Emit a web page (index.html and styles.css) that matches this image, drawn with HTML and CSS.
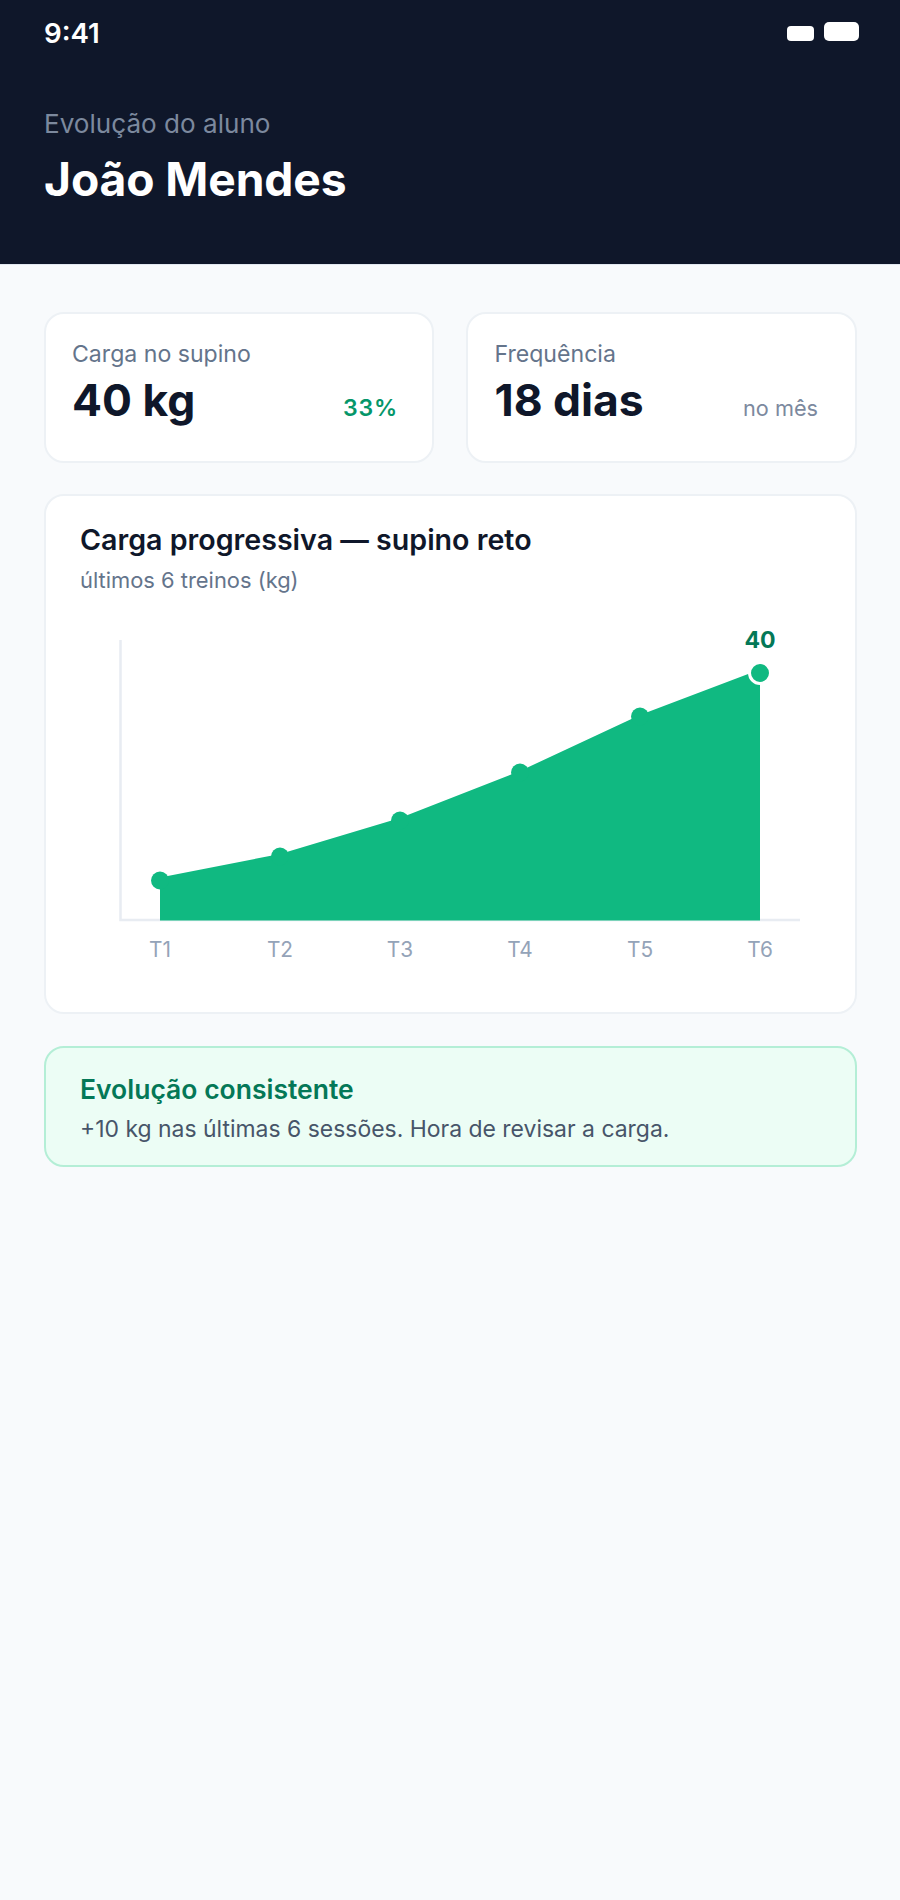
FILE: index.html
```html
<!DOCTYPE html>
<html lang="pt">
<head>
<meta charset="utf-8">
<title>Evolução do aluno</title>
<link rel="stylesheet" href="styles.css">
</head>
<body>
<div class="page">
  <header class="hero">
    <div class="status">
      <span class="time">9:41</span>
      <div class="status-icons"><span class="pill-small"></span><span class="pill-large"></span></div>
    </div>
    <p class="hero-label">Evolução do aluno</p>
    <h1 class="hero-name">João Mendes</h1>
  </header>
  <main class="content">
    <section class="stats">
      <article class="card stat">
        <p class="stat-label">Carga no supino</p>
        <div class="stat-row">
          <span class="stat-value">40 kg</span>
          <span class="stat-delta">33%</span>
        </div>
      </article>
      <article class="card stat">
        <p class="stat-label">Frequência</p>
        <div class="stat-row">
          <span class="stat-value">18 dias</span>
          <span class="stat-note">no mês</span>
        </div>
      </article>
    </section>
    <section class="card chart-card">
      <h2 class="chart-title">Carga progressiva — supino reto</h2>
      <p class="chart-sub">últimos 6 treinos (kg)</p>
      <svg class="chart" width="740" height="340" viewBox="0 0 740 340" aria-label="Carga por treino">
        <path class="axis" d="M40.5 1V281H720"/>
        <polygon class="area" points="80,238.5 200,215 320,179 440,132 560,76 680,30.5 680,281.5 80,281.5"/>
        <circle class="dot" cx="80" cy="241.5" r="9"/>
        <circle class="dot" cx="200" cy="217.5" r="9"/>
        <circle class="dot" cx="320" cy="181.5" r="9"/>
        <circle class="dot" cx="440" cy="133.5" r="9"/>
        <circle class="dot" cx="560" cy="77.5" r="9"/>
        <circle class="dot dot-last" cx="680" cy="34" r="10.5"/>
        <text class="peak" x="680" y="9">40</text>
        <text class="tick" x="80" y="317.5">T1</text>
        <text class="tick" x="200" y="317.5">T2</text>
        <text class="tick" x="320" y="317.5">T3</text>
        <text class="tick" x="440" y="317.5">T4</text>
        <text class="tick" x="560" y="317.5">T5</text>
        <text class="tick" x="680" y="317.5">T6</text>
      </svg>
    </section>
    <section class="banner">
      <h3 class="banner-title">Evolução consistente</h3>
      <p class="banner-text">+10 kg nas últimas 6 sessões. Hora de revisar a carga.</p>
    </section>
  </main>
</div>
</body>
</html>
```

FILE: styles.css
```css
* { box-sizing: border-box; }
html, body { margin: 0; padding: 0; }
body {
  width: 900px;
  height: 1900px;
  overflow: hidden;
  background: #f8fafc;
  font-family: Inter, "Liberation Sans", sans-serif;
}
p, h1, h2, h3 { margin: 0; }

.hero {
  height: 265px;
  padding: 0 41px 0 44px;
  background: #0f172a;
  border-bottom: 1px solid #e2e8f0;
}
.status {
  display: flex;
  justify-content: space-between;
  align-items: center;
  height: 66px;
}
.time { color: #fff; font-size: 27.7px; font-weight: 600; }
.status-icons { display: flex; align-items: center; gap: 10px; }
.pill-small { width: 27px; height: 15px; margin-top: 1px; border-radius: 4px; background: #fff; }
.pill-large { width: 35px; height: 19px; margin-top: -3px; border-radius: 5px; background: #fff; }
.hero-label { margin-top: 42px; color: #7c899e; font-size: 26.1px; line-height: 32px; }
.hero-name { margin-top: 11px; color: #fff; font-size: 46.2px; font-weight: 700; line-height: 56px; letter-spacing: -.1px; }

.content { display: flex; flex-direction: column; gap: 31.5px; padding: 47px 43.5px 0; }
.stats { display: grid; grid-template-columns: 1fr 1fr; gap: 32px; }
.card { background: #fff; border: 2px solid #edf1f5; border-radius: 20px; }
.stat { height: 150.5px; padding: 24px 34px 0 26.5px; }
.stat-label { color: #64748b; font-size: 23.1px; line-height: 32px; }
.stat-row { display: flex; justify-content: space-between; align-items: baseline; margin-top: 3px; }
.stat-value { color: #0f172a; font-size: 44.4px; font-weight: 700; line-height: 54px; }
.stat-delta { color: #059669; font-size: 23.1px; font-weight: 600; letter-spacing: .8px; }
.stat-note { margin-right: 2.5px; color: #7c899e; font-size: 21.7px; }

.chart-card { height: 520px; padding: 26px 34.5px 0; }
.chart-title { color: #0f172a; font-size: 28.6px; font-weight: 600; line-height: 36px; }
.chart-sub { margin-top: 7px; color: #64748b; font-size: 21.9px; line-height: 30px; }
.chart { display: block; margin-top: 44px; overflow: visible; }
.axis { fill: none; stroke: #e8ecf2; stroke-width: 2.5; }
.area, .dot { fill: #10b981; }
.dot-last { stroke: #fff; stroke-width: 3; }
.peak { fill: #047857; font-size: 23.1px; font-weight: 700; text-anchor: middle; }
.tick { fill: #94a3b8; font-size: 20.8px; text-anchor: middle; }

.banner {
  height: 121px;
  padding: 23px 34.5px 0;
  background: #ecfdf5;
  border: 2px solid #b4eed6;
  border-radius: 20px;
}
.banner-title { color: #047857; font-size: 26.5px; font-weight: 600; line-height: 36px; }
.banner-text { margin-top: 5px; color: #475569; font-size: 22.95px; line-height: 34px; }
```
